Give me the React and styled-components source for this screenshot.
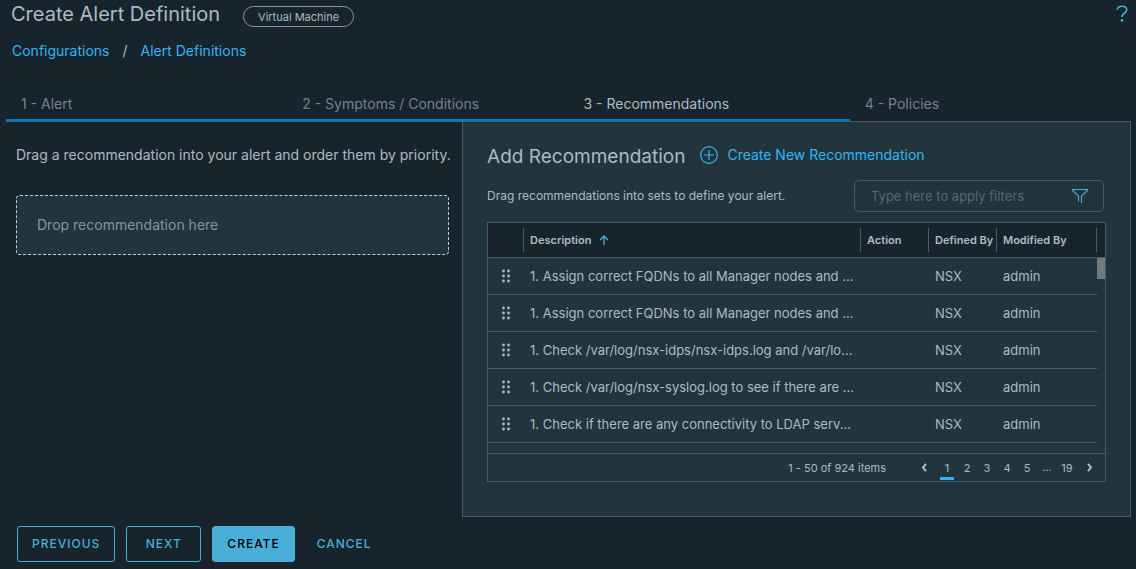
import React, { useState } from 'react'
import styled, { createGlobalStyle } from 'styled-components'

const GlobalStyle = createGlobalStyle`
    *{
        box-sizing:border-box;
    }
    body{
        margin:0;
        background-color:#17242b;
        color:#adbbc4;
        font-family:Inter, "Open Sans", sans-serif;
        font-size:14px;
        line-height:20px;
    }
    button, input{
        font:inherit;
        color:inherit;
    }
    h1, h2, p{
        margin:0;
        font-weight:400;
    }
    a{
        color:#34b4f4;
        text-decoration:none;
    }
`;
const Page = styled.div`
    padding:0 5px 6px 6px;
`;
const Header = styled.header`
    display:flex;
    align-items:center;
    gap:23px;
    padding:0 3px 0 5px;
`;
const Title = styled.h1`
    font-size:20px;
    line-height:26px;
`;
const Badge = styled.span`
    display:flex;
    align-items:center;
    height:21px;
    margin-top:6px;
    padding:0 14px;
    border:1px solid #8d9599;
    border-radius:11px;
    font-size:11px;
`;
const HelpButton = styled.button`
    display:flex;
    margin-left:auto;
    padding:0;
    border:0;
    background:none;
    color:#49afd9;
    cursor:pointer;
`;
const Breadcrumb = styled.nav`
    display:flex;
    gap:13px;
    margin-top:14px;
    padding:0 6px;
`;
const Tabs = styled.nav`
    position:relative;
    z-index:1;
    display:grid;
    grid-template-columns:repeat(4, 1fr);
    margin-top:30px;
`;
const Tab = styled.button`
    height:31px;
    padding:0 15px 3px;
    border:0;
    border-bottom:3px solid ${props => props.$reached ? "#0779b8" : "transparent"};
    background:none;
    color:${props => props.$active ? "#adbbc4" : "#6f838f"};
    text-align:left;
    cursor:pointer;
`;
const Content = styled.main`
    display:grid;
    grid-template-columns:minmax(0, 15fr) minmax(0, 22fr);
    margin-top:-1px;
`;
const AlertPane = styled.section`
    padding:24px 13px 0 10px;
`;
const Hint = styled.p`
    white-space:nowrap;
`;
const DropZone = styled.div`
    display:flex;
    align-items:center;
    height:60px;
    margin-top:30px;
    padding:0 20px;
    border:1px dashed #c4d0d6;
    border-radius:4px;
    background-color:#22343c;
    color:#8496a0;
`;
const Panel = styled.section`
    padding:23px 24px 34px;
    border:1px solid #495a67;
    background-color:#22343c;
`;
const PanelHeader = styled.div`
    display:flex;
    align-items:flex-start;
    gap:15px;
`;
const PanelTitle = styled.h2`
    font-size:19px;
    line-height:24px;
`;
const CreateLink = styled.a`
    display:flex;
    align-items:center;
    gap:9px;
`;
const FilterRow = styled.div`
    display:flex;
    align-items:center;
    justify-content:space-between;
    margin:11px 2px 10px 0;
    font-size:12px;
`;
const FilterBox = styled.div`
    display:flex;
    align-items:center;
    width:250px;
    height:32px;
    padding:0 14px 0 16px;
    border:1px solid #495a67;
    border-radius:5px;
    font-size:13px;
`;
const FilterInput = styled.input`
    flex:1;
    min-width:0;
    padding:0;
    border:0;
    outline:0;
    background:none;
    &::placeholder{
        color:#566872;
        opacity:1;
    }
`;
const Grid = styled.div`
    border:1px solid #495a67;
`;
const GridBody = styled.div`
    position:relative;
    padding-bottom:10px;
`;
const Table = styled.table`
    width:100%;
    table-layout:fixed;
    border-collapse:separate;
    border-spacing:0;
`;
const Col = styled.col`
    width:${props => props.$width};
`;
const HeadCell = styled.th`
    height:35px;
    padding:0;
    border-bottom:1px solid #495a67;
    background-color:#17242b;
    font-size:11px;
    font-weight:600;
    text-align:left;
    white-space:nowrap;
`;
const HeadLabel = styled.div`
    display:flex;
    align-items:center;
    gap:8px;
    height:24px;
    padding-left:6px;
    border-right:1px solid #495a67;
`;
const Cell = styled.td`
    height:37px;
    padding:0 0 0 6px;
    border-bottom:1px solid #495a67;
    overflow:hidden;
    font-size:13px;
    white-space:nowrap;
`;
const GripCell = styled(Cell)`
    padding:0 0 0 13px;
    cursor:move;
`;
const Grip = styled.svg`
    display:block;
`;
const ScrollThumb = styled.div`
    position:absolute;
    top:35px;
    right:0;
    width:8px;
    height:21px;
    background-color:#737a7d;
`;
const GridFooter = styled.div`
    display:flex;
    align-items:center;
    justify-content:flex-end;
    gap:25px;
    height:28px;
    padding-right:2px;
    border-top:1px solid #495a67;
    font-size:11px;
`;
const Pager = styled.nav`
    display:flex;
    height:25px;
`;
const PageButton = styled.button`
    display:flex;
    align-items:center;
    justify-content:center;
    width:${props => props.$wide ? "20px" : "14px"};
    margin:0 3px;
    padding:3px 0 0;
    border:0;
    border-bottom:3px solid ${props => props.$current ? "#34b4f4" : "transparent"};
    background:none;
    cursor:pointer;
`;
const Gap = styled.span`
    width:14px;
    margin:0 3px;
    line-height:25px;
    text-align:center;
`;
const Actions = styled.footer`
    display:flex;
    gap:11px;
    margin-top:9px;
    padding-left:11px;
`;
const Button = styled.button`
    min-width:${props => props.$flat ? "0" : "75px"};
    height:36px;
    padding:0 ${props => props.$flat ? "10px" : "14px"};
    border:1px solid ${props => props.$flat ? "transparent" : "#49afd9"};
    border-radius:3px;
    background-color:${props => props.$primary ? "#49afd9" : "transparent"};
    color:${props => props.$primary ? "#000" : "#49afd9"};
    font-size:12px;
    font-weight:500;
    letter-spacing:1px;
    cursor:pointer;
`;

const steps = ["1 - Alert", "2 - Symptoms / Conditions", "3 - Recommendations", "4 - Policies"];
const rows = [
    { id: 1, description: "1. Assign correct FQDNs to all Manager nodes and ...", definedBy: "NSX", modifiedBy: "admin" },
    { id: 2, description: "1. Assign correct FQDNs to all Manager nodes and ...", definedBy: "NSX", modifiedBy: "admin" },
    { id: 3, description: "1. Check /var/log/nsx-idps/nsx-idps.log and /var/lo...", definedBy: "NSX", modifiedBy: "admin" },
    { id: 4, description: "1. Check /var/log/nsx-syslog.log to see if there are ...", definedBy: "NSX", modifiedBy: "admin" },
    { id: 5, description: "1. Check if there are any connectivity to LDAP serv...", definedBy: "NSX", modifiedBy: "admin" },
];

const HelpIcon = () => (
    <svg width="12" height="18" viewBox="0 0 12 18" fill="none" stroke="currentColor" strokeWidth="1.6">
        <path d="M1.200 4.600C1.600 2.300 3.400 1.200 5.900 1.200c2.800 0 4.800 1.400 4.800 3.700 0 3.500-4.700 3.200-4.700 7.100" />
        <circle cx="6" cy="15.400" r="1.300" fill="currentColor" stroke="none" />
    </svg>
)
const PlusCircleIcon = () => (
    <svg width="18" height="18" viewBox="0 0 18 18" fill="none" stroke="#34b4f4" strokeWidth="1.200">
        <circle cx="9" cy="9" r="8.300" />
        <path d="M9 4v10M4 9h10" />
    </svg>
)
const FilterIcon = () => (
    <svg width="18" height="16" viewBox="0 0 18 16" fill="none" stroke="#49afd9" strokeWidth="1.100">
        <path d="M7.500 13.500V8L1.500 2.200V1.500h15v.7L10.500 8v7" />
    </svg>
)
const SortIcon = () => (
    <svg width="10" height="10" viewBox="0 0 10 10" fill="none" stroke="#49afd9" strokeWidth="1.300">
        <path d="M5 10V1M1 5l4-4 4 4" />
    </svg>
)
const ChevronIcon = ({ right }) => (
    <svg width="6" height="9" viewBox="0 0 6 9" fill="none" stroke="currentColor" strokeWidth="2">
        <path d={right ? "M1 .8 4 4.500 1 8.200" : "M5 .8 2 4.500l3 3.700"} />
    </svg>
)
const GripIcon = () => (
    <Grip width="10" height="14" viewBox="0 0 10 14" fill="#adbbc4">
        {[2, 7, 12].map((y) => (
            <React.Fragment key={y}>
                <circle cx="2.500" cy={y} r="1.400" />
                <circle cx="7.500" cy={y} r="1.400" />
            </React.Fragment>
        ))}
    </Grip>
)

const App = () => {
    const [step, setStep] = useState(2);
    const [page, setPage] = useState(1);
    const [filter, setFilter] = useState("");
    return (
        <Page>
            <GlobalStyle />
            <Header>
                <Title>Create Alert Definition</Title>
                <Badge>Virtual Machine</Badge>
                <HelpButton aria-label="Help"><HelpIcon /></HelpButton>
            </Header>
            <Breadcrumb>
                <a href="#configurations">Configurations</a>
                <span>/</span>
                <a href="#definitions">Alert Definitions</a>
            </Breadcrumb>
            <Tabs>
                {steps.map((label, i) => (
                    <Tab key={label} $reached={i <= step} $active={i === step} onClick={() => setStep(i)}>{label}</Tab>
                ))}
            </Tabs>
            <Content>
                <AlertPane>
                    <Hint>Drag a recommendation into your alert and order them by priority.</Hint>
                    <DropZone>Drop recommendation here</DropZone>
                </AlertPane>
                <Panel>
                    <PanelHeader>
                        <PanelTitle>Add Recommendation</PanelTitle>
                        <CreateLink href="#new"><PlusCircleIcon />Create New Recommendation</CreateLink>
                    </PanelHeader>
                    <FilterRow>
                        <p>Drag recommendations into sets to define your alert.</p>
                        <FilterBox>
                            <FilterInput
                                aria-label="Filter"
                                placeholder="Type here to apply filters"
                                value={filter}
                                onChange={(e) => setFilter(e.target.value)}
                            />
                            <FilterIcon />
                        </FilterBox>
                    </FilterRow>
                    <Grid>
                        <GridBody>
                            <Table>
                                <colgroup>
                                    <Col $width="36px" />
                                    <Col />
                                    <Col $width="68px" />
                                    <Col $width="68px" />
                                    <Col $width="100px" />
                                    <Col $width="8px" />
                                </colgroup>
                                <thead>
                                    <tr>
                                        <HeadCell><HeadLabel /></HeadCell>
                                        <HeadCell><HeadLabel>Description <SortIcon /></HeadLabel></HeadCell>
                                        <HeadCell><HeadLabel>Action</HeadLabel></HeadCell>
                                        <HeadCell><HeadLabel>Defined By</HeadLabel></HeadCell>
                                        <HeadCell><HeadLabel>Modified By</HeadLabel></HeadCell>
                                        <HeadCell />
                                    </tr>
                                </thead>
                                <tbody>
                                    {rows.map((row) => (
                                        <tr key={row.id}>
                                            <GripCell><GripIcon /></GripCell>
                                            <Cell>{row.description}</Cell>
                                            <Cell />
                                            <Cell>{row.definedBy}</Cell>
                                            <Cell>{row.modifiedBy}</Cell>
                                        </tr>
                                    ))}
                                </tbody>
                            </Table>
                            <ScrollThumb />
                        </GridBody>
                        <GridFooter>
                            <span>1 - 50 of 924 items</span>
                            <Pager>
                                <PageButton $wide aria-label="Previous page"><ChevronIcon /></PageButton>
                                {[1, 2, 3, 4, 5].map((n) => (
                                    <PageButton key={n} $current={n === page} onClick={() => setPage(n)}>{n}</PageButton>
                                ))}
                                <Gap>...</Gap>
                                <PageButton onClick={() => setPage(19)}>19</PageButton>
                                <PageButton $wide aria-label="Next page"><ChevronIcon right /></PageButton>
                            </Pager>
                        </GridFooter>
                    </Grid>
                </Panel>
            </Content>
            <Actions>
                <Button>PREVIOUS</Button>
                <Button>NEXT</Button>
                <Button $primary>CREATE</Button>
                <Button $flat>CANCEL</Button>
            </Actions>
        </Page>
    )
}

export default App;
